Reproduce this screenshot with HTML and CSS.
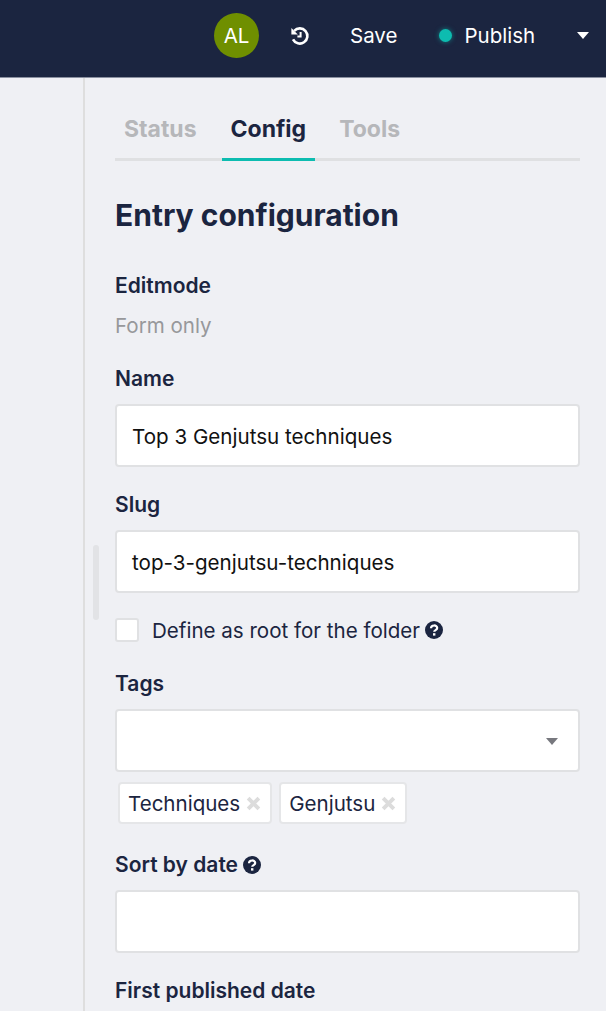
FILE: index.html
```html
<!DOCTYPE html>
<html lang="en">
<head>
  <meta charset="UTF-8">
  <title>Entry configuration</title>
  <link rel="stylesheet" href="styles.css">
</head>
<body>
  <header class="topbar">
    <div class="avatar">AL</div>
    <svg class="history" width="20" height="20" viewBox="0 0 20 20" fill="none" stroke="#fff" stroke-width="2.6">
      <path d="M4.2 4.8A7.6 7.6 0 1 1 3 13.4"/>
      <path d="M1.4 2V8.4H7.8Z" fill="#fff" stroke="none"/>
      <path d="M10.6 6V10.6H7.4" stroke-width="2"/>
    </svg>
    <span class="save">Save</span>
    <span class="dot"></span>
    <span class="publish">Publish</span>
    <span class="caret"></span>
  </header>

  <div class="layout">
    <aside class="sidebar"></aside>
    <div class="scroll-thumb"></div>
    <main class="panel">
      <nav class="tabs">
        <a class="tab">Status</a>
        <a class="tab active">Config</a>
        <a class="tab">Tools</a>
      </nav>

      <h1>Entry configuration</h1>

      <div class="label">Editmode</div>
      <div class="muted">Form only</div>

      <div class="label name-label">Name</div>
      <div class="field">Top 3 Genjutsu techniques</div>

      <div class="label slug-label">Slug</div>
      <div class="field">top-3-genjutsu-techniques</div>

      <div class="check-row">
        <span class="checkbox"></span>
        <span>Define as root for the folder</span>
        <svg class="help" width="18" height="18" viewBox="0 0 18 18">
          <circle cx="9" cy="9" r="9" fill="#1b2540"/>
          <path d="M6 7.2C6 3.6 12.2 3.6 12.2 7C12.2 9.2 9.2 9 9.2 10.8" fill="none" stroke="#fff" stroke-width="2.2"/>
          <rect x="8" y="12.2" width="2.4" height="2.4" fill="#fff"/>
        </svg>
      </div>

      <div class="label tags-label">Tags</div>
      <div class="field select"><span class="select-caret"></span></div>
      <div class="tag-list">
        <span class="tag">Techniques <svg class="tag-x" width="15" height="15" viewBox="0 0 14 14"><path d="M2 2L12 12M12 2L2 12" stroke="#dcdcdc" stroke-width="3.6"/></svg></span>
        <span class="tag">Genjutsu <svg class="tag-x" width="15" height="15" viewBox="0 0 14 14"><path d="M2 2L12 12M12 2L2 12" stroke="#dcdcdc" stroke-width="3.6"/></svg></span>
      </div>

      <div class="label sort-label">Sort by date
        <svg class="help" width="18" height="18" viewBox="0 0 18 18">
          <circle cx="9" cy="9" r="9" fill="#1b2540"/>
          <path d="M6 7.2C6 3.6 12.2 3.6 12.2 7C12.2 9.2 9.2 9 9.2 10.8" fill="none" stroke="#fff" stroke-width="2.2"/>
          <rect x="8" y="12.2" width="2.4" height="2.4" fill="#fff"/>
        </svg>
      </div>
      <div class="field"></div>

      <div class="label first-label">First published date</div>
    </main>
  </div>
</body>
</html>
```

FILE: styles.css
```css
html, body {
  margin: 0;
  padding: 0;
  height: 1011px;
  overflow: hidden;
}
body {
  font-family: Inter, "Liberation Sans", sans-serif;
  font-size: 20.55px;
  color: #1b2540;
  background-color: #eff0f4;
}

/* top bar */
.topbar {
  height: 78px;
  box-sizing: border-box;
  display: flex;
  align-items: center;
  padding: 0 17px 6px 214px;
  background-color: #1b2540;
  border-bottom: 1px solid #8a90a0;
  color: #fff;
  font-size: 20.5px;
}
.avatar {
  width: 45px;
  height: 45px;
  border-radius: 50%;
  background-color: #6f8f00;
  display: flex;
  align-items: center;
  justify-content: center;
}
.history {
  margin-left: 31px;
}
.save {
  margin-left: 40px;
}
.dot {
  width: 13px;
  height: 13px;
  border-radius: 50%;
  background-color: #0dbcb0;
  box-shadow: 0 0 5px rgba(13, 188, 176, 0.6);
  margin-left: 42px;
}
.publish {
  margin-left: 12px;
}
.caret {
  width: 0;
  height: 0;
  border-left: 6px solid transparent;
  border-right: 6px solid transparent;
  border-top: 7px solid #fff;
  margin-left: auto;
}

/* layout */
.layout {
  display: flex;
  position: relative;
  height: 933px;
}
.sidebar {
  width: 83px;
  flex: none;
  border-right: 2px solid #dedede;
}
.scroll-thumb {
  position: absolute;
  left: 93px;
  top: 467px;
  width: 6px;
  height: 75px;
  border-radius: 3px;
  background-color: #e2e3e6;
}
.panel {
  flex: 1;
  padding: 0 26px 0 30px;
}

/* tabs */
.tabs {
  display: flex;
  height: 83px;
  box-sizing: border-box;
  border-bottom: 3px solid #dfe0e2;
}
.tab {
  box-sizing: border-box;
  height: 83px;
  padding: 37px 9px 0;
  margin-right: 15px;
  font-size: 23px;
  line-height: 28px;
  font-weight: 700;
  color: #b6b7ba;
}
.tab.active {
  margin-left: 1px;
  color: #1b2540;
  border-bottom: 3px solid #0dbcb0;
}

h1 {
  margin: 34px 0 0;
  font-size: 30px;
  line-height: 40px;
  font-weight: 700;
}

/* form */
.label {
  font-size: 21px;
  font-weight: 600;
  line-height: 26px;
  margin-top: 38px;
}
.muted {
  color: #97989b;
  line-height: 26px;
  margin-top: 14px;
}
.name-label { margin-top: 27px; }
.slug-label { margin-top: 25px; }
.tags-label { margin-top: 29px; }
.sort-label { margin-top: 28px; display: flex; align-items: center; gap: 5px; }
.first-label { margin-top: 25px; }
.field {
  box-sizing: border-box;
  height: 63px;
  margin-top: 12px;
  padding: 2px 15px 0;
  display: flex;
  align-items: center;
  background-color: #fff;
  border: 2px solid #e0e1e3;
  border-radius: 4px;
  color: #111;
  font-size: 20.6px;
}
.check-row {
  display: flex;
  align-items: center;
  margin-top: 25px;
  height: 24px;
}
.checkbox {
  box-sizing: border-box;
  width: 24px;
  height: 24px;
  background-color: #fff;
  border: 2px solid #e0e1e3;
  border-radius: 3px;
  margin-right: 13px;
}
.help {
  margin-left: 5px;
  flex: none;
}
.sort-label .help {
  margin-left: 0;
}
.select {
  justify-content: flex-end;
}
.select-caret {
  width: 0;
  height: 0;
  border-left: 6px solid transparent;
  border-right: 6px solid transparent;
  border-top: 7px solid #77787e;
  margin-right: 5px;
}
.tag-list {
  display: flex;
  gap: 7px;
  margin: 10px 0 0 3px;
}
.tag {
  box-sizing: border-box;
  height: 42px;
  padding: 0 9px 0 8px;
  display: flex;
  align-items: center;
  gap: 6px;
  background-color: #fff;
  border: 2px solid #e5e6e8;
  border-radius: 4px;
}
```
